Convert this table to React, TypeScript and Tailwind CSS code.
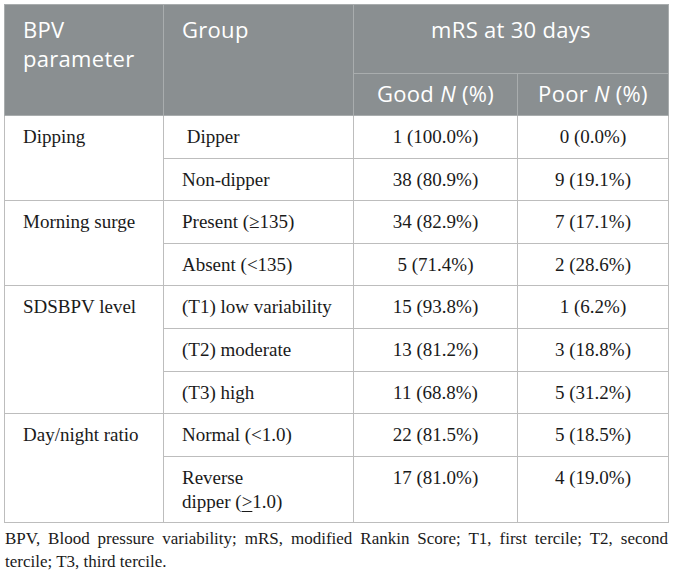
const rows: { param: string; span: number; group: React.ReactNode; good: string; poor: string }[] = [
  { param: 'Dipping', span: 2, group: '\u00a0Dipper', good: '1 (100.0%)', poor: '0 (0.0%)' },
  { param: '', span: 0, group: 'Non-dipper', good: '38 (80.9%)', poor: '9 (19.1%)' },
  { param: 'Morning surge', span: 2, group: 'Present (\u2265135)', good: '34 (82.9%)', poor: '7 (17.1%)' },
  { param: '', span: 0, group: 'Absent (<135)', good: '5 (71.4%)', poor: '2 (28.6%)' },
  { param: 'SDSBPV level', span: 3, group: '(T1) low variability', good: '15 (93.8%)', poor: '1 (6.2%)' },
  { param: '', span: 0, group: '(T2) moderate', good: '13 (81.2%)', poor: '3 (18.8%)' },
  { param: '', span: 0, group: '(T3) high', good: '11 (68.8%)', poor: '5 (31.2%)' },
  { param: 'Day/night ratio', span: 2, group: 'Normal (<1.0)', good: '22 (81.5%)', poor: '5 (18.5%)' },
  {
    param: '',
    span: 0,
    group: (
      <>
        Reverse
        <br />
        dipper (<span className="underline underline-offset-[3px] decoration-1">&gt;</span>1.0)
      </>
    ),
    good: '17 (81.0%)',
    poor: '4 (19.0%)',
  },
];

const head = "border border-[#a9adae] px-[18px] align-top font-normal text-white font-['Open_Sans']";
const cell =
  "border border-[#bdbdbd] align-top pt-[9px] pb-[8.6px] leading-[24px] text-[19px] text-[#1a1a1a] font-['Liberation_Serif']";

export default function App() {
  return (
    <div className="bg-white w-[675px] h-[579px] pl-[4px] pt-[4px] pr-[7px]">
      <table className="border-collapse border border-[#a8a8a8] table-fixed w-[664px]">
        <colgroup>
          <col className="w-[159px]" />
          <col className="w-[190px]" />
          <col className="w-[164px]" />
          <col className="w-[151px]" />
        </colgroup>
        <thead className="bg-[#8a8f91] text-[22px] leading-[29px] tracking-[0.3px]">
          <tr>
            <th rowSpan={2} className={`${head} text-left pt-[10px]`}>
              BPV
              <br />
              parameter
            </th>
            <th rowSpan={2} className={`${head} text-left pt-[10px]`}>
              Group
            </th>
            <th colSpan={2} className={`${head} text-center pt-[10px] h-[69px]`}>
              mRS at 30 days
            </th>
          </tr>
          <tr>
            <th className={`${head} text-center h-[42px] py-[5px] px-0`}>
              Good <i>N</i> (%)
            </th>
            <th className={`${head} text-center h-[42px] py-[5px] px-0`}>
              Poor <i>N</i> (%)
            </th>
          </tr>
        </thead>
        <tbody>
          {rows.map((r, i) => (
            <tr key={i}>
              {r.span > 0 && (
                <td rowSpan={r.span} className={`${cell} pl-[18px]`}>
                  {r.param}
                </td>
              )}
              <td className={`${cell} pl-[18px] pr-2`}>{r.group}</td>
              <td className={`${cell} text-center`}>{r.good}</td>
              <td className={`${cell} text-center`}>{r.poor}</td>
            </tr>
          ))}
        </tbody>
      </table>
      <p className="mt-[4px] ml-[1px] text-[17px] leading-[23px] text-[#1a1a1a] text-justify font-['Liberation_Serif']">
        BPV, Blood pressure variability; mRS, modified Rankin Score; T1, first tercile; T2, second tercile; T3, third
        tercile.
      </p>
    </div>
  );
}
